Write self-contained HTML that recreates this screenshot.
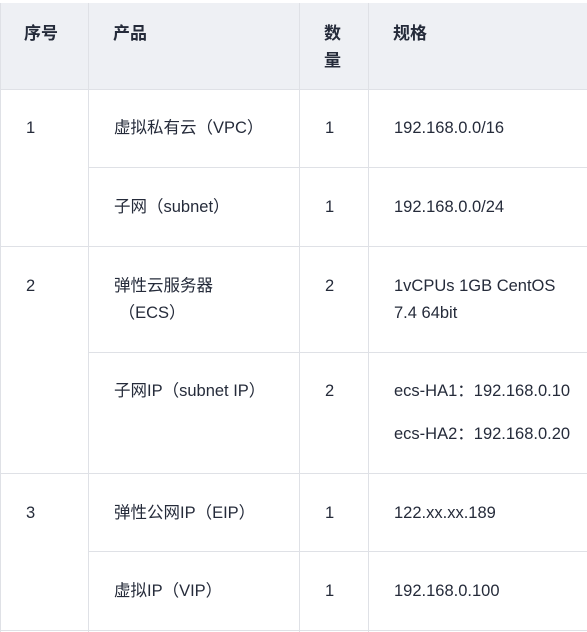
<!DOCTYPE html>
<html><head><meta charset="utf-8"><style>
body{margin:0;width:587px;height:632px;overflow:hidden;background:#fff;font-family:"Liberation Sans","Noto Sans CJK SC",sans-serif;font-size:16.5px;color:#252b3a;position:relative}
.l{position:absolute;background:#dfe1e6}
.t{position:absolute;line-height:27px;white-space:nowrap}
.h{font-weight:bold;font-size:17px}
</style></head><body>
<div style="position:absolute;left:0;top:3px;width:587px;height:86px;background:#eef0f4"></div>
<div class="l" style="left:0;top:3px;width:1px;height:629px"></div>
<div class="l" style="left:88px;top:3px;width:1px;height:629px"></div>
<div class="l" style="left:299px;top:3px;width:1px;height:629px"></div>
<div class="l" style="left:368px;top:3px;width:1px;height:629px"></div>
<div class="l" style="left:0;top:89px;width:587px;height:1px"></div>
<div class="l" style="left:88px;top:167px;width:499px;height:1px"></div>
<div class="l" style="left:0;top:246px;width:587px;height:1px"></div>
<div class="l" style="left:88px;top:352px;width:499px;height:1px"></div>
<div class="l" style="left:0;top:473px;width:587px;height:1px"></div>
<div class="l" style="left:88px;top:551px;width:499px;height:1px"></div>
<div class="l" style="left:0;top:630px;width:587px;height:1px"></div>

<div class="t h" style="left:24px;top:20px">序号</div>
<div class="t h" style="left:113px;top:20px">产品</div>
<div class="t h" style="left:324px;top:20px">数<br>量</div>
<div class="t h" style="left:393px;top:20px">规格</div>

<div class="t" style="left:26px;top:115px">1</div>
<div class="t" style="left:114px;top:115px">虚拟私有云（VPC）</div>
<div class="t" style="left:325px;top:115px">1</div>
<div class="t" style="left:394px;top:115px">192.168.0.0/16</div>

<div class="t" style="left:114px;top:194px">子网（subnet）</div>
<div class="t" style="left:325px;top:194px">1</div>
<div class="t" style="left:394px;top:194px">192.168.0.0/24</div>

<div class="t" style="left:26px;top:273px">2</div>
<div class="t" style="left:114px;top:273px">弹性云服务器<br>&nbsp;（ECS）</div>
<div class="t" style="left:325px;top:273px">2</div>
<div class="t" style="left:394px;top:273px">1vCPUs 1GB CentOS<br>7.4 64bit</div>

<div class="t" style="left:114px;top:378px">子网IP（subnet IP）</div>
<div class="t" style="left:325px;top:378px">2</div>
<div class="t" style="left:394px;top:378px">ecs-HA1：192.168.0.10</div>
<div class="t" style="left:394px;top:421px">ecs-HA2：192.168.0.20</div>

<div class="t" style="left:26px;top:500px">3</div>
<div class="t" style="left:114px;top:500px">弹性公网IP（EIP）</div>
<div class="t" style="left:325px;top:500px">1</div>
<div class="t" style="left:394px;top:500px">122.xx.xx.189</div>

<div class="t" style="left:114px;top:578px">虚拟IP（VIP）</div>
<div class="t" style="left:325px;top:578px">1</div>
<div class="t" style="left:394px;top:578px">192.168.0.100</div>
</body></html>
